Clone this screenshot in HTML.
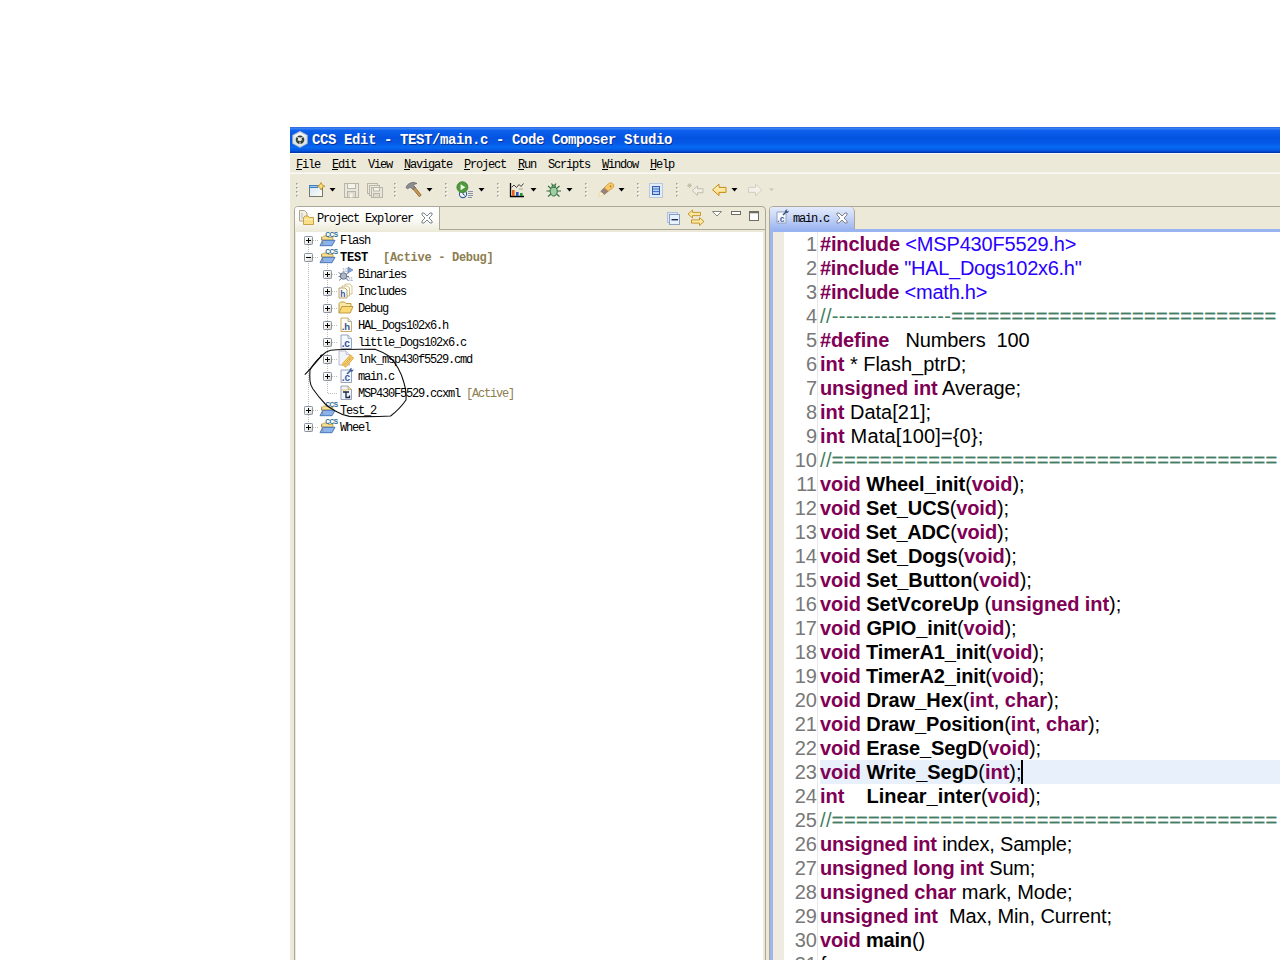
<!DOCTYPE html>
<html>
<head>
<meta charset="utf-8">
<title>CCS Edit</title>
<style>
html,body{margin:0;padding:0;}
body{width:1280px;height:960px;overflow:hidden;background:#fff;position:relative;font-family:"Liberation Mono",monospace;}
.abs{position:absolute;}
#win{position:absolute;left:290px;top:127px;width:990px;height:833px;background:#ece9d8;overflow:hidden;}
#title{position:absolute;left:0;top:0;width:990px;height:26px;
 background:linear-gradient(to bottom,#2a63d9 0%,#3b83f4 5%,#0c60ec 14%,#0353e0 42%,#0559e6 62%,#066af3 78%,#0557e2 90%,#0340c0 96%,#002e9e 100%);}
#title:after{content:"";position:absolute;left:0;top:26px;width:990px;height:1px;background:#f5f8fd;}
#title .t{position:absolute;left:22px;top:5px;color:#fff;font:bold 14px "Liberation Mono",monospace;letter-spacing:-0.4px;white-space:pre;text-shadow:1px 1px 0 #0a2f8f;}
#menu{position:absolute;left:0;top:26px;width:990px;height:20px;background:#ece9d8;border-top:1px solid #f5f8fd;box-sizing:border-box;}
.mi{position:absolute;top:4px;font:12px "Liberation Mono",monospace;letter-spacing:-1.2px;color:#000;white-space:pre;}
.mi u{text-decoration:underline;}
#tbline{position:absolute;left:0;top:45px;width:990px;height:2px;background:linear-gradient(to bottom,#f3f1e8,#fbfaf6);}
.tsep{position:absolute;top:55px;width:2px;height:16px;background-image:linear-gradient(to bottom,#a9a593 50%,transparent 50%);background-size:2px 4px;}
.dd{position:absolute;top:61px;width:0;height:0;border-left:3px solid transparent;border-right:3px solid transparent;border-top:3px solid #000;}
/* project explorer */
#pe{position:absolute;left:4px;top:79px;width:470px;height:760px;border:1px solid #aca899;border-radius:4px 4px 0 0;background:#ece9d8;}
#petab{position:absolute;left:0;top:0;width:144px;height:25px;background:linear-gradient(to bottom,#fff 0%,#fdfdfa 45%,#ece9d8 100%);border-radius:3px 0 0 0;}
#petabr{position:absolute;left:144px;top:0;width:1px;height:23px;background:#aca899;}
#pehdrline{position:absolute;left:144px;top:22px;width:326px;height:1px;background:#aca899;}
#petree{position:absolute;left:1px;top:25px;width:467px;height:740px;background:#fff;}
.lbl{position:absolute;font:12px "Liberation Mono",monospace;letter-spacing:-1.2px;color:#000;white-space:pre;margin-top:1px;}
.lbl b{letter-spacing:-0.2px;}
/* editor */
#ed{position:absolute;left:479px;top:79px;width:520px;height:760px;border:1px solid #aca899;border-radius:4px 0 0 0;background:#ece9d8;}
#edtab{position:absolute;left:0;top:0;width:84px;height:23px;background:linear-gradient(to bottom,#e4ebfb 0%,#c7d5f7 45%,#99b4f0 100%);border-right:1px solid #aca899;border-radius:3px 5px 0 0;}
#edline{position:absolute;left:0;top:22px;width:520px;height:3px;background:#99b4f0;}
#edbody{position:absolute;left:0;top:25px;width:520px;height:740px;background:#fff;}
#edblue{position:absolute;left:0;top:22px;width:2.5px;height:745px;background:#9db6ee;}
#ruler{position:absolute;left:2.5px;top:25px;width:11.5px;height:740px;background:#efebe0;}
#lnsep{position:absolute;left:47px;top:25px;width:1px;height:740px;background:#e8e8e8;}
#curline{position:absolute;left:50px;top:553px;width:470px;height:24px;background:#e8f0fc;}
#caret{position:absolute;left:251px;top:553px;width:2px;height:24px;background:#000;z-index:3;}
.ln{position:absolute;left:15px;width:32px;text-align:right;font:20px "Liberation Sans",sans-serif;color:#787878;height:24px;line-height:24px;white-space:pre;}
.cl{position:absolute;left:50px;font:20px "Liberation Sans",sans-serif;color:#000;height:24px;line-height:24px;white-space:pre;}
.k{color:#7f0055;font-weight:bold;}
.s{color:#2a00ff;}
.c{color:#3f7f5f;}
.q{-webkit-text-stroke:0.4px #3f7f5f;}
.b{font-weight:bold;}
</style>
</head>
<body>
<div id="win">
 <div id="title"><span class="t">CCS Edit - TEST/main.c - Code Composer Studio</span></div>
 <div id="menu">
  <span class="mi" style="left:6px"><u>F</u>ile</span>
  <span class="mi" style="left:42px"><u>E</u>dit</span>
  <span class="mi" style="left:78px">View</span>
  <span class="mi" style="left:114px"><u>N</u>avigate</span>
  <span class="mi" style="left:174px"><u>P</u>roject</span>
  <span class="mi" style="left:228px"><u>R</u>un</span>
  <span class="mi" style="left:258px">Scripts</span>
  <span class="mi" style="left:312px"><u>W</u>indow</span>
  <span class="mi" style="left:360px"><u>H</u>elp</span>
 </div>
 <div id="tbline"></div>
 <div id="toolbar">
<svg id="tb" style="position:absolute;left:0;top:0" width="990" height="833" viewBox="290 127 990 833">
<defs>
 <g id="grip"><rect x="1" y="1" width="1.500" height="1.500" fill="#fff"/><rect x="0" y="0" width="1.500" height="1.500" fill="#9f9b8a"/></g>
 <g id="sep"><use href="#grip" y="183"/><use href="#grip" y="187"/><use href="#grip" y="191"/><use href="#grip" y="195"/></g>
 <path id="dd" d="M0 188h6l-3 3.4z" fill="#000"/>
 <linearGradient id="gnew" x1="0" y1="0" x2="1" y2="1"><stop offset="0" stop-color="#cfe6fb"/><stop offset="1" stop-color="#fffdf0"/></linearGradient>
 <linearGradient id="garr" x1="0" y1="0" x2="0" y2="1"><stop offset="0" stop-color="#fff8d0"/><stop offset="1" stop-color="#fbd774"/></linearGradient>
</defs>
<!-- separators -->
<use href="#sep" x="296"/><use href="#sep" x="394"/><use href="#sep" x="445"/><use href="#sep" x="497"/><use href="#sep" x="585"/><use href="#sep" x="637"/><use href="#sep" x="676"/>
<!-- dropdowns -->
<use href="#dd" x="329.5"/><use href="#dd" x="426.5"/><use href="#dd" x="478.5"/><use href="#dd" x="530.5"/><use href="#dd" x="566.5"/><use href="#dd" x="618.5"/><use href="#dd" x="731.5"/>
<path d="M769 188.5h5l-2.5 2.5z" fill="#c9c5b5"/>
<!-- new -->
<g>
 <rect x="309.5" y="185.5" width="13" height="11" fill="url(#gnew)" stroke="#77786a"/>
 <rect x="309" y="185" width="9" height="3" fill="#3f7fc4"/>
 <rect x="310" y="186" width="7" height="1" fill="#9cc8f0"/>
 <path d="M321 182.5l1.3 2.6 2.7 1.1-2.7 1.1-1.3 2.7-1.3-2.7-2.7-1.1 2.7-1.1z" fill="#fbe27a" stroke="#b98b1c" stroke-width="0.8"/>
</g>
<!-- save (disabled) -->
<g fill="none" stroke="#b9b6a8">
 <rect x="344.5" y="183.5" width="14" height="14" fill="#e9e7dc"/>
 <rect x="347.5" y="183.5" width="8" height="5" fill="#f4f3ec"/>
 <rect x="347.5" y="191.5" width="8" height="6" fill="#dddbcf"/>
 <rect x="350" y="193.5" width="2.5" height="4" fill="#f4f3ec" stroke="none"/>
</g>
<!-- save all (disabled) -->
<g fill="none" stroke="#b9b6a8">
 <rect x="367.5" y="183.5" width="10" height="10" fill="#eceadf"/>
 <rect x="369.5" y="185.5" width="10" height="10" fill="#eceadf"/>
 <rect x="371.5" y="187.5" width="11" height="10" fill="#e9e7dc"/>
 <rect x="373.5" y="187.5" width="6" height="3.5" fill="#f4f3ec"/>
 <rect x="373.5" y="193.5" width="6" height="4" fill="#dddbcf"/>
</g>
<!-- hammer -->
<g>
 <path d="M412.5 188.5l6.8 8.2 1.9-1.6-6.6-8.4z" fill="#c89552" stroke="#8b6127" stroke-width="0.8"/>
 <path d="M406 187.2c1.2-2.8 4-4.6 7.6-4.9l3.4 1.2c-1.7.2-2.9.9-3.4 1.9l1.7 2-2.3 2.3-1.9-2c-1.4-.4-2.7.1-3.6 1.4z" fill="#8c8d8f" stroke="#5d5e60" stroke-width="0.7"/>
</g>
<!-- run -->
<g>
 <circle cx="463" cy="194" r="3.6" fill="#f5f9ff" stroke="#2f5f9e" stroke-width="1.1"/>
 <path d="M463 191.8v2.4l1.9 1.2" stroke="#1d3f78" stroke-width="0.9" fill="none"/>
 <circle cx="462.4" cy="187.2" r="5.5" fill="#4f9a3c" stroke="#3a7a2c" stroke-width="0.8"/>
 <path d="M460.6 184.2l4.8 3-4.8 3z" fill="#f2fbe9"/>
 <path d="M468 191.5h5M468 193.5h5M468 195.5h5M468 197.5h4" stroke="#8a93a8" stroke-width="1"/>
</g>
<!-- chart -->
<g>
 <path d="M510.5 183v13.5H524" stroke="#000" stroke-width="1.3" fill="none"/>
 <rect x="512" y="190" width="2.6" height="6" fill="#e8601c"/>
 <rect x="516" y="192" width="2.6" height="4" fill="#2a55c0"/>
 <rect x="520" y="193" width="2.6" height="3" fill="#27963a"/>
 <path d="M511.5 187.5l2.5-2.5 2.5 2.5 2.5-3 2 2 2.500-3" stroke="#333" stroke-width="0.9" fill="none"/>
 <path d="M519 189h4" stroke="#8a8a8a" stroke-width="0.7"/>
</g>
<!-- bug -->
<g>
 <path d="M548 186l3 2.5M559.500 186l-3 2.500M546.500 191h4M561 191h-4M548 196.500l3-2.500M559.500 196.500l-3-2.500M551.500 183.500l1.500 2.500M556 183.500l-1.500 2.500" stroke="#2e6b3e" stroke-width="1.1" fill="none"/>
 <ellipse cx="553.7" cy="191.3" rx="3.6" ry="4.7" fill="#9fcfa3" stroke="#2e6b3e" stroke-width="1"/>
 <ellipse cx="553.7" cy="186.3" rx="1.8" ry="1.4" fill="#5e9a66" stroke="#2e6b3e" stroke-width="0.7"/>
</g>
<!-- pen / flashlight -->
<g>
 <path d="M598.5 196.500l2.300-5.200 3.700 3.200z" fill="#fff6cf" stroke="#d9c98b" stroke-width="0.5"/>
 <path d="M600.800 191.300l3.400-3.600 4 3.500-3.700 3.300z" fill="#9a8278" stroke="#7b655c" stroke-width="0.5"/>
 <path d="M604.200 187.700l4.300-4.000c1.600-1.300 3.600-1.000 4.600.2 1.000 1.300.8 3.100-.5 4.300l-4.400 3z" fill="#f6c86a" stroke="#c4902c" stroke-width="0.7"/>
 <circle cx="610.600" cy="186.300" r="0.900" fill="#b07a18"/>
</g>
<!-- toggle mark occurrences -->
<g>
 <rect x="649.500" y="183.500" width="13" height="14" fill="#e3ecfa" stroke="#8da6cf" stroke-dasharray="1 1"/>
 <rect x="652.500" y="186.500" width="7" height="8" fill="#b9d0f2" stroke="#2f5fb0"/>
 <path d="M653 189h6M653 191.500h6" stroke="#2f5fb0" stroke-width="0.8"/>
</g>
<!-- last edit (disabled) -->
<g>
 <path d="M692 190.500l5.500-4.500v2.700h5.500v4h-5.500v2.700z" fill="#f0eee4" stroke="#bdb9aa" stroke-width="0.9"/>
 <path d="M689.500 183v5M687 185.500h5M687.800 183.800l3.400 3.400M691.200 183.800l-3.400 3.400" stroke="#bdb9aa" stroke-width="0.8"/>
</g>
<!-- back -->
<path d="M712.500 189.800l6.500-5.600v3.200h7v5h-7v3.200z" fill="url(#garr)" stroke="#c58a17" stroke-width="1"/>
<!-- forward (disabled) -->
<path d="M762 189.800l-6.500-5.600v3.200h-7v5h7v3.200z" fill="#f2f0e7" stroke="#cfccbe" stroke-width="0.9"/>
</svg>
</div>
 <div id="pe">
  <div id="petab"></div><div id="petabr"></div>
  <div id="pehdrline"></div>
  <div id="petree"></div>
 </div>
 <div id="ed">
  <div id="edtab"></div>
  <div id="edline"></div>
  <div id="edbody"></div>
  <div id="edblue"></div>
  <div id="ruler"></div>
  <div id="lnsep"></div>
  <div id="curline"></div><div id="caret"></div>
  <div id="code">
<div class="ln" style="top:25px">1</div><div class="cl" id="L1" style="top:25px;letter-spacing:-0.161px"><span class="k">#include</span> <span class="s">&lt;MSP430F5529.h&gt;</span></div>
<div class="ln" style="top:49px">2</div><div class="cl" id="L2" style="top:49px;letter-spacing:-0.28px"><span class="k">#include</span> <span class="s">&quot;HAL_Dogs102x6.h&quot;</span></div>
<div class="ln" style="top:73px">3</div><div class="cl" id="L3" style="top:73px;letter-spacing:-0.237px"><span class="k">#include</span> <span class="s">&lt;math.h&gt;</span></div>
<div class="ln" style="top:97px">4</div><div class="cl" id="L4" style="top:97px;letter-spacing:0.367px"><span class="c">//-----------------<span class="q">===========================</span></span></div>
<div class="ln" style="top:121px">5</div><div class="cl" id="L5" style="top:121px;letter-spacing:-0.124px"><span class="k">#define</span>   Numbers  100</div>
<div class="ln" style="top:145px">6</div><div class="cl" id="L6" style="top:145px;letter-spacing:-0.019px"><span class="k">int</span> * Flash_ptrD;</div>
<div class="ln" style="top:169px">7</div><div class="cl" id="L7" style="top:169px;letter-spacing:-0.1px"><span class="k">unsigned int</span> Average;</div>
<div class="ln" style="top:193px">8</div><div class="cl" id="L8" style="top:193px;letter-spacing:0.0px"><span class="k">int</span> Data[21];</div>
<div class="ln" style="top:217px">9</div><div class="cl" id="L9" style="top:217px;letter-spacing:0.153px"><span class="k">int</span> Mata[100]={0};</div>
<div class="ln" style="top:241px">10</div><div class="cl" id="L10" style="top:241px;letter-spacing:0.368px"><span class="c">//<span class="q">=====================================</span></span></div>
<div class="ln" style="top:265px">11</div><div class="cl" id="L11" style="top:265px;letter-spacing:-0.105px"><span class="k">void</span> <span class="b">Wheel_init</span>(<span class="k">void</span>);</div>
<div class="ln" style="top:289px">12</div><div class="cl" id="L12" style="top:289px;letter-spacing:-0.122px"><span class="k">void</span> <span class="b">Set_UCS</span>(<span class="k">void</span>);</div>
<div class="ln" style="top:313px">13</div><div class="cl" id="L13" style="top:313px;letter-spacing:-0.178px"><span class="k">void</span> <span class="b">Set_ADC</span>(<span class="k">void</span>);</div>
<div class="ln" style="top:337px">14</div><div class="cl" id="L14" style="top:337px;letter-spacing:-0.111px"><span class="k">void</span> <span class="b">Set_Dogs</span>(<span class="k">void</span>);</div>
<div class="ln" style="top:361px">15</div><div class="cl" id="L15" style="top:361px;letter-spacing:-0.071px"><span class="k">void</span> <span class="b">Set_Button</span>(<span class="k">void</span>);</div>
<div class="ln" style="top:385px">16</div><div class="cl" id="L16" style="top:385px;letter-spacing:-0.073px"><span class="k">void</span> <span class="b">SetVcoreUp</span> (<span class="k">unsigned int</span>);</div>
<div class="ln" style="top:409px">17</div><div class="cl" id="L17" style="top:409px;letter-spacing:-0.06px"><span class="k">void</span> <span class="b">GPIO_init</span>(<span class="k">void</span>);</div>
<div class="ln" style="top:433px">18</div><div class="cl" id="L18" style="top:433px;letter-spacing:-0.135px"><span class="k">void</span> <span class="b">TimerA1_init</span>(<span class="k">void</span>);</div>
<div class="ln" style="top:457px">19</div><div class="cl" id="L19" style="top:457px;letter-spacing:-0.135px"><span class="k">void</span> <span class="b">TimerA2_init</span>(<span class="k">void</span>);</div>
<div class="ln" style="top:481px">20</div><div class="cl" id="L20" style="top:481px;letter-spacing:-0.042px"><span class="k">void</span> <span class="b">Draw_Hex</span>(<span class="k">int</span>, <span class="k">char</span>);</div>
<div class="ln" style="top:505px">21</div><div class="cl" id="L21" style="top:505px;letter-spacing:-0.076px"><span class="k">void</span> <span class="b">Draw_Position</span>(<span class="k">int</span>, <span class="k">char</span>);</div>
<div class="ln" style="top:529px">22</div><div class="cl" id="L22" style="top:529px;letter-spacing:-0.11px"><span class="k">void</span> <span class="b">Erase_SegD</span>(<span class="k">void</span>);</div>
<div class="ln" style="top:553px">23</div><div class="cl" id="L23" style="top:553px;letter-spacing:-0.02px"><span class="k">void</span> <span class="b">Write_SegD</span>(<span class="k">int</span>);</div>
<div class="ln" style="top:577px">24</div><div class="cl" id="L24" style="top:577px;letter-spacing:-0.012px"><span class="k">int</span>    <span class="b">Linear_inter</span>(<span class="k">void</span>);</div>
<div class="ln" style="top:601px">25</div><div class="cl" id="L25" style="top:601px;letter-spacing:0.368px"><span class="c">//<span class="q">=====================================</span></span></div>
<div class="ln" style="top:625px">26</div><div class="cl" id="L26" style="top:625px;letter-spacing:-0.169px"><span class="k">unsigned int</span> index, Sample;</div>
<div class="ln" style="top:649px">27</div><div class="cl" id="L27" style="top:649px;letter-spacing:-0.167px"><span class="k">unsigned long int</span> Sum;</div>
<div class="ln" style="top:673px">28</div><div class="cl" id="L28" style="top:673px;letter-spacing:-0.033px"><span class="k">unsigned char</span> mark, Mode;</div>
<div class="ln" style="top:697px">29</div><div class="cl" id="L29" style="top:697px;letter-spacing:-0.077px"><span class="k">unsigned int</span>  Max, Min, Current;</div>
<div class="ln" style="top:721px">30</div><div class="cl" id="L30" style="top:721px;letter-spacing:-0.16px"><span class="k">void</span> <span class="b">main</span>()</div>
<div class="ln" style="top:745px">31</div><div class="cl" id="L31" style="top:745px;letter-spacing:0px">{</div>
</div>
 </div>
<div id="overlay">
<svg id="ov" style="position:absolute;left:0;top:0" width="990" height="833" viewBox="290 127 990 833">
<!-- title icon -->
<g>
 <path d="M300 131.300l7.300 3.900v8.300l-7.300 3.900-7.300-3.900v-8.300z" fill="#dfe4ea" stroke="#aab3be" stroke-width="0.800"/>
 <path d="M300 132.800l5.800 3.100-5.800 3.200-5.800-3.200z" fill="#f6f7f9"/>
 <circle cx="300" cy="139.800" r="4.300" fill="#2f3d2f"/>
 <circle cx="299.800" cy="139.300" r="2" fill="#efe4ec"/>
 <path d="M297 136.800l2.300 1.500M303 136.800l-2.300 1.500M300 144.300v-2.500" stroke="#e8ece8" stroke-width="1"/>
 <path d="M296.500 141.500l1.500-1M303.500 141.500l-1.500-1" stroke="#5a8a5a" stroke-width="0.900"/>
</g>
<!-- PE tab icon -->
<g>
 <path d="M299.500 210.500h5l2.500 2.500v8h-7.500z" fill="#f4f1e4" stroke="#a69a7c" stroke-width="0.900"/>
 <path d="M301 214h2M301 216h2M301 218h2" stroke="#9aa7c4" stroke-width="0.800"/>
 <path d="M303.500 224.500v-7l1.500-1.500h3l1.500 1.500h4v7z" fill="#fbdf86" stroke="#c09a3c" stroke-width="0.900"/>
 <path d="M304 219.500h9" stroke="#fff3c0" stroke-width="0.800"/>
</g>
<!-- PE tab close -->
<path d="M422 213h2l3 3 3-3h2v2l-3 3 3 3v2h-2l-3-3-3 3h-2v-2l3-3-3-3z" fill="#fdfdfb" stroke="#6f7686" stroke-width="0.900"/>
<!-- PE toolbar: collapse all -->
<g>
 <rect x="667.500" y="212.500" width="10" height="10" fill="#dbe7f7" stroke="#a9bddb" stroke-width="0.900"/>
 <rect x="669.500" y="214.500" width="10" height="10" fill="#e8f1fc" stroke="#7e98bd" stroke-width="0.900"/>
 <rect x="671.500" y="219" width="6.500" height="1.400" fill="#1c2c55"/>
</g>
<!-- link with editor -->
<g fill="#fde9a0" stroke="#c48d1f" stroke-width="0.900">
 <path d="M688 214l4.500-4v2.400h8v3.200h-8v2.400z"/>
 <path d="M704 221.500l-4.500-4v2.400h-8v3.200h8v2.400z"/>
</g>
<!-- view menu -->
<path d="M712.500 211.500h9l-4.500 4.500z" fill="#fff" stroke="#7d7a6c" stroke-width="0.900"/>
<!-- minimize -->
<rect x="731.500" y="211.500" width="9" height="3" fill="#fff" stroke="#6f6d62" stroke-width="1"/>
<!-- maximize -->
<g><rect x="749.500" y="211.500" width="9" height="9" fill="#fff" stroke="#6f6d62" stroke-width="1"/><path d="M749 212.500h10" stroke="#6f6d62" stroke-width="1.600"/></g>
<!-- editor tab icon -->
<g transform="translate(774.500,209.500)"><path d="M2.500 2.500h9v11h-9z" fill="#f7faff" stroke="#8e98b4" stroke-width="0.900"/><text x="2.800" y="12.300" font-family="Liberation Sans" font-size="8.500" font-weight="bold" fill="#3d5fa0">.c</text><path d="M8.500 5.500l3.500-3.500" stroke="#3b4f7a" stroke-width="1.500"/><circle cx="12.300" cy="1.700" r="1.700" fill="#3b4f7a"/><circle cx="13" cy="1" r="0.800" fill="#dfe8fb"/></g>
<!-- editor tab close -->
<path d="M837 213h2l3 3 3-3h2v2l-3 3 3 3v2h-2l-3-3-3 3h-2v-2l3-3-3-3z" fill="#fdfdfb" stroke="#6f7686" stroke-width="0.900"/>
<!-- tree -->
<defs><linearGradient id="gbox" x1="0" y1="0" x2="1" y2="1"><stop offset="0" stop-color="#ffffff"/><stop offset="0.5" stop-color="#f6f5f0"/><stop offset="1" stop-color="#cfcbbd"/></linearGradient></defs>
<g stroke="#bdbdb6" stroke-width="1" stroke-dasharray="1 1" fill="none">
<path d="M308.5 245v178"/>
<path d="M327.5 262v132"/>
<path d="M313 240.5h6"/>
<path d="M313 257.5h6"/>
<path d="M332 274.5h5"/>
<path d="M332 291.5h5"/>
<path d="M332 308.5h5"/>
<path d="M332 325.5h5"/>
<path d="M332 342.5h5"/>
<path d="M332 359.5h5"/>
<path d="M332 376.5h5"/>
<path d="M328 393.5h9"/>
<path d="M313 410.5h6"/>
<path d="M313 427.5h6"/>
</g>
<rect x="304.5" y="236.5" width="8" height="8" fill="url(#gbox)" stroke="#8793a3" rx="0.8"/><path d="M306 240.5h5" stroke="#000" stroke-width="1"/><path d="M308.5 238v5" stroke="#000" stroke-width="1"/>
<g transform="translate(319,231.5)"><path d="M2.500 6.500l2-2h3.500l1 1.500h5v2.500h-11.500z" fill="#f7df8e" stroke="#b89a48" stroke-width="0.8"/><path d="M1 14.200l2.800-5.400h12.200l-3 5.400z" fill="#8db4ea" stroke="#3d6db5" stroke-width="0.9"/><path d="M2.300 5.200l1.700 8" stroke="#8a7a5a" stroke-width="0.7"/><text x="6.200" y="5.200" font-family="Liberation Sans" font-size="6.500" font-weight="bold" fill="#2e6a8e" letter-spacing="-0.4">CCS</text></g>
<rect x="304.5" y="253.5" width="8" height="8" fill="url(#gbox)" stroke="#8793a3" rx="0.8"/><path d="M306 257.5h5" stroke="#000" stroke-width="1"/>
<g transform="translate(319,248.5)"><path d="M2.500 6.500l2-2h3.500l1 1.500h5v2.500h-11.500z" fill="#f7df8e" stroke="#b89a48" stroke-width="0.8"/><path d="M1 14.200l2.800-5.400h12.200l-3 5.400z" fill="#8db4ea" stroke="#3d6db5" stroke-width="0.9"/><path d="M2.300 5.200l1.700 8" stroke="#8a7a5a" stroke-width="0.7"/><text x="6.200" y="5.200" font-family="Liberation Sans" font-size="6.500" font-weight="bold" fill="#2e6a8e" letter-spacing="-0.4">CCS</text></g>
<rect x="323.5" y="270.5" width="8" height="8" fill="url(#gbox)" stroke="#8793a3" rx="0.8"/><path d="M325 274.5h5" stroke="#000" stroke-width="1"/><path d="M327.5 272v5" stroke="#000" stroke-width="1"/>
<g transform="translate(337.5,265.5)"><path d="M10.500 1.500l5 3-5 3z" fill="#7f9fd0" stroke="#5578b0" stroke-width="0.6"/><text x="4.500" y="6" font-family="Liberation Sans" font-size="5.500" fill="#8a9ab8">10</text><text x="9.500" y="15.500" font-family="Liberation Sans" font-size="5.500" fill="#8a9ab8">01</text><circle cx="6" cy="10.500" r="3.300" fill="#aab6c8" stroke="#5f6f88" stroke-width="0.9"/><path d="M1 7l3 2M1 11h2.500M1.500 15l3-2.500M11 7l-2.500 2M11.500 11h-2.500M10.500 15l-2.500-2.500" stroke="#5f6f88" stroke-width="0.9"/></g>
<rect x="323.5" y="287.5" width="8" height="8" fill="url(#gbox)" stroke="#8793a3" rx="0.8"/><path d="M325 291.5h5" stroke="#000" stroke-width="1"/><path d="M327.5 289v5" stroke="#000" stroke-width="1"/>
<g transform="translate(337.5,282.5)"><path d="M7.500 1.500h5l2 2v8h-7z" fill="#fffdf4" stroke="#cdb97c" stroke-width="0.8"/><path d="M4.500 3.500h5.500l2 2v8h-7.500z" fill="#fffdf4" stroke="#c4ae6e" stroke-width="0.8"/><path d="M1.500 5.500h6l2 2v8h-8z" fill="#fffef8" stroke="#b39a56" stroke-width="0.9"/><text x="2.800" y="14.300" font-family="Liberation Sans" font-size="8.500" font-weight="bold" fill="#3a55a8">h</text></g>
<rect x="323.5" y="304.5" width="8" height="8" fill="url(#gbox)" stroke="#8793a3" rx="0.8"/><path d="M325 308.5h5" stroke="#000" stroke-width="1"/><path d="M327.5 306v5" stroke="#000" stroke-width="1"/>
<g transform="translate(337.5,299.5)"><path d="M1.500 13.500v-9.500l1.500-1.500h4l1.500 1.500h5v2.500" fill="#f9e7a4" stroke="#b8943a" stroke-width="0.9"/><path d="M1.500 13.500l2.800-6.500h11.200l-2.800 6.500z" fill="#fbd977" stroke="#b8943a" stroke-width="0.9"/></g>
<rect x="323.5" y="321.5" width="8" height="8" fill="url(#gbox)" stroke="#8793a3" rx="0.8"/><path d="M325 325.5h5" stroke="#000" stroke-width="1"/><path d="M327.5 323v5" stroke="#000" stroke-width="1"/>
<g transform="translate(337.5,316.5)"><path d="M3.500 1.500h7l3.500 3.500v10h-10.500z" fill="#fffdf2" stroke="#c2a45a" stroke-width="0.9"/><path d="M10.500 1.500v3.500h3.500" fill="#e9e5d0" stroke="#8e98b4" stroke-width="0.7"/><text x="4.300" y="13.300" font-family="Liberation Sans" font-size="9.500" font-weight="bold" fill="#3550a0" letter-spacing="-0.3">.h</text></g>
<rect x="323.5" y="338.5" width="8" height="8" fill="url(#gbox)" stroke="#8793a3" rx="0.8"/><path d="M325 342.5h5" stroke="#000" stroke-width="1"/><path d="M327.5 340v5" stroke="#000" stroke-width="1"/>
<g transform="translate(337.5,333.5)"><path d="M3.500 1.500h7l3.500 3.500v10h-10.500z" fill="#f4f8ff" stroke="#8e98b4" stroke-width="0.9"/><path d="M10.500 1.500v3.500h3.500" fill="#dfe6f5" stroke="#8e98b4" stroke-width="0.7"/><text x="4.300" y="13.300" font-family="Liberation Sans" font-size="10" font-weight="bold" fill="#3550a0" letter-spacing="-0.3">.c</text></g>
<rect x="323.5" y="355.5" width="8" height="8" fill="url(#gbox)" stroke="#8793a3" rx="0.8"/><path d="M325 359.5h5" stroke="#000" stroke-width="1"/><path d="M327.5 357v5" stroke="#000" stroke-width="1"/>
<g transform="translate(337.5,350.5)"><path d="M1.500 0.500h7l3.500 3.500v10.500h-10.500z" fill="#f3f4fb" stroke="#b3b7c8" stroke-width="0.9"/><path d="M8.500 0.500v3.500h3.500" fill="#e2e4ef" stroke="#b3b7c8" stroke-width="0.7"/><path d="M5.500 14l7.500-8.500M8 15.500l7-8" stroke="#e4a72a" stroke-width="2.600" stroke-linecap="round"/><path d="M5.500 14l7.500-8.500M8 15.500l7-8" stroke="#fbe08a" stroke-width="1" stroke-linecap="round"/></g>
<rect x="323.5" y="372.5" width="8" height="8" fill="url(#gbox)" stroke="#8793a3" rx="0.8"/><path d="M325 376.5h5" stroke="#000" stroke-width="1"/><path d="M327.5 374v5" stroke="#000" stroke-width="1"/>
<g transform="translate(337.5,367.5)"><path d="M3.500 2.500h10.500v12.500h-10.500z" fill="#f4f8ff" stroke="#8e98b4" stroke-width="0.9"/><text x="4.300" y="13.500" font-family="Liberation Sans" font-size="10" font-weight="bold" fill="#3d5fa0">.c</text><path d="M9.500 6.500l4-4" stroke="#3b5f9a" stroke-width="1.600"/><circle cx="14" cy="2.300" r="1.900" fill="#3b5f9a"/><circle cx="14.800" cy="1.500" r="0.900" fill="#fff"/></g>
<g transform="translate(337.5,384.5)"><path d="M3.500 1.500h7l3.500 3.500v10h-10.500z" fill="#eef4fd" stroke="#8e98b4" stroke-width="0.9"/><path d="M10.500 1.500v3.500h3.500" fill="#f6e3a0" stroke="#b89a48" stroke-width="0.7"/><path d="M5.500 7.500h6M8.500 7.500v5.500h3.500v-2" stroke="#1a2238" stroke-width="1.300" fill="none"/><path d="M4 5.500h6" stroke="#e9c65a" stroke-width="1"/></g>
<rect x="304.5" y="406.5" width="8" height="8" fill="url(#gbox)" stroke="#8793a3" rx="0.8"/><path d="M306 410.5h5" stroke="#000" stroke-width="1"/><path d="M308.5 408v5" stroke="#000" stroke-width="1"/>
<g transform="translate(319,401.5)"><path d="M2.500 6.500l2-2h3.500l1 1.500h5v2.500h-11.500z" fill="#f7df8e" stroke="#b89a48" stroke-width="0.8"/><path d="M1 14.200l2.800-5.400h12.200l-3 5.400z" fill="#8db4ea" stroke="#3d6db5" stroke-width="0.9"/><path d="M2.300 5.200l1.700 8" stroke="#8a7a5a" stroke-width="0.7"/><text x="6.200" y="5.200" font-family="Liberation Sans" font-size="6.500" font-weight="bold" fill="#2e6a8e" letter-spacing="-0.4">CCS</text></g>
<rect x="304.5" y="423.5" width="8" height="8" fill="url(#gbox)" stroke="#8793a3" rx="0.8"/><path d="M306 427.5h5" stroke="#000" stroke-width="1"/><path d="M308.5 425v5" stroke="#000" stroke-width="1"/>
<g transform="translate(319,418.5)"><path d="M2.500 6.500l2-2h3.500l1 1.500h5v2.500h-11.500z" fill="#f7df8e" stroke="#b89a48" stroke-width="0.8"/><path d="M1 14.200l2.800-5.400h12.200l-3 5.400z" fill="#8db4ea" stroke="#3d6db5" stroke-width="0.9"/><path d="M2.300 5.200l1.700 8" stroke="#8a7a5a" stroke-width="0.7"/><text x="6.200" y="5.200" font-family="Liberation Sans" font-size="6.500" font-weight="bold" fill="#2e6a8e" letter-spacing="-0.4">CCS</text></g>
<!-- hand-drawn annotation -->
<path d="M304.800 374.700C311 368 317 361 322.200 355.200C320.500 354.500 319.800 357.500 321.500 356.500" fill="none" stroke="#111" stroke-width="1.100"/>
<path d="M322 355.500C324.500 353 327.500 351 330.600 350.300C345 349 362 349.200 375.600 349.400C380.500 351 385 353.500 388.750 356C392.500 359.500 395.500 363.500 398 368C400.500 372.500 402.500 377 403.750 382C405.500 388 406.500 394 406 400C401.500 406.500 396.500 411.500 390.600 416C377 416.800 363 416.800 349.400 416.400C344 415.500 339.500 413.500 335.300 411C331.500 409 328 406.500 325 403.750C320.500 399 316.500 394 312.800 388.750C311.300 386.500 310.300 384 310 381C309.700 377.500 309.700 373.500 310 370C313 364.500 317.500 359.500 322 355.500" fill="none" stroke="#111" stroke-width="1.100"/>
</svg>
<span class="lbl" style="left:50px;top:106px">Flash</span>
<span class="lbl" style="left:50px;top:123px"><b>TEST</b></span>
<span class="lbl" style="left:68px;top:140px">Binaries</span>
<span class="lbl" style="left:68px;top:157px">Includes</span>
<span class="lbl" style="left:68px;top:174px">Debug</span>
<span class="lbl" style="left:68px;top:191px">HAL_Dogs102x6.h</span>
<span class="lbl" style="left:68px;top:208px">little_Dogs102x6.c</span>
<span class="lbl" style="left:68px;top:225px">lnk_msp430f5529.cmd</span>
<span class="lbl" style="left:68px;top:242px">main.c</span>
<span class="lbl" style="left:68px;top:259px">MSP430F5529.ccxml<span style="color:#8c7e4f"> [Active]</span></span>
<span class="lbl" style="left:50px;top:276px">Test_2</span>
<span class="lbl" style="left:50px;top:293px">Wheel</span>
<span class="lbl" style="left:93px;top:123px;font-weight:bold;color:#8c7e4f;letter-spacing:-0.3px">[Active - Debug]</span>
<span class="lbl" style="left:27px;top:84px">Project Explorer</span>
<span class="lbl" style="left:503px;top:84px">main.c</span>
</div>
</div>
</body>
</html>
